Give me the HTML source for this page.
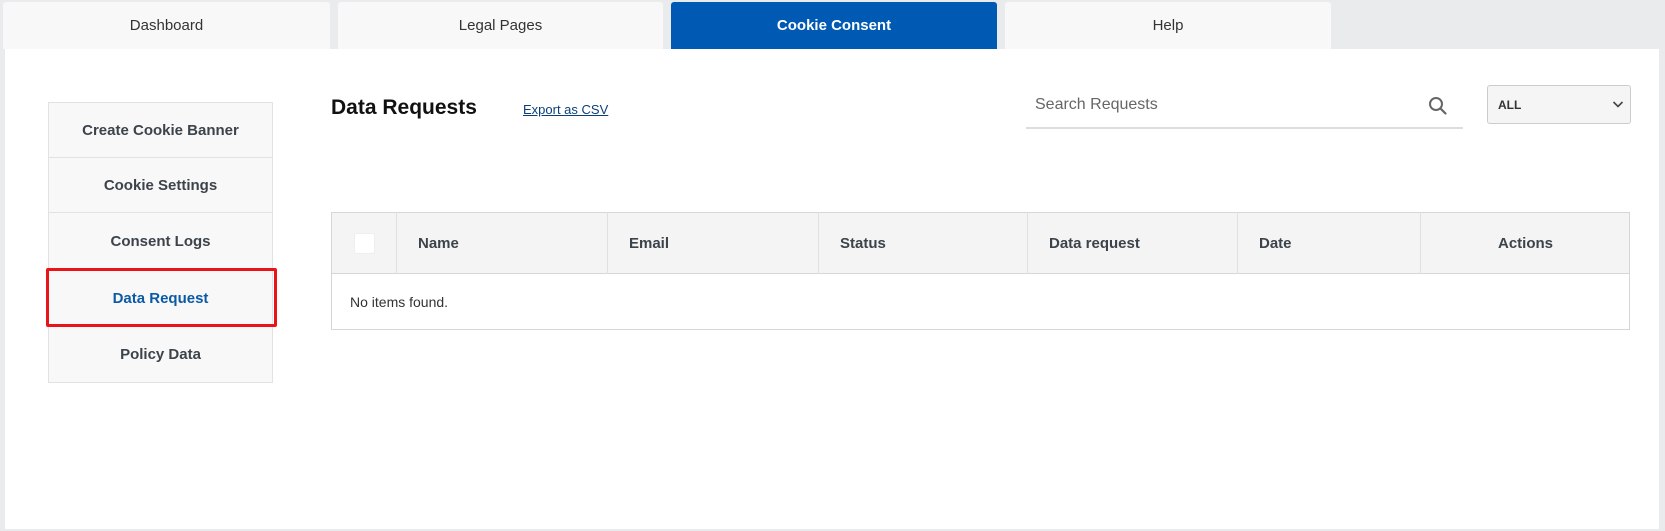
<!DOCTYPE html>
<html><head><meta charset="utf-8"><style>
*{box-sizing:border-box;margin:0;padding:0}
body{width:1665px;height:531px;background:#eaebed;font-family:"Liberation Sans",sans-serif;position:relative;overflow:hidden}
.a{position:absolute}
.tab{position:absolute;top:2px;height:47px;background:#f8f8f8;border-radius:3px 3px 0 0;font-size:15px;color:#333;display:flex;align-items:center;justify-content:center}
.panel{position:absolute;left:5px;top:49px;width:1654px;height:480px;background:#fff}
.side{position:absolute;left:48px;width:225px;background:#f8f8f8;border:1px solid #e2e2e2;font-size:15px;font-weight:bold;color:#3c434a;display:flex;align-items:center;justify-content:center}
.th{position:absolute;top:212px;height:62px;border-right:1px solid #e0e0e0;font-size:15px;font-weight:bold;color:#3c434a;display:flex;align-items:center;padding-left:21px}
</style></head><body>
<div class="tab" style="left:3px;width:327px">Dashboard</div>
<div class="tab" style="left:338px;width:325px">Legal Pages</div>
<div class="tab" style="left:671px;width:326px;background:#0059b3;color:#fff;font-weight:bold">Cookie Consent</div>
<div class="tab" style="left:1005px;width:326px">Help</div>
<div class="panel"></div>

<div class="side" style="top:102px;height:56px">Create Cookie Banner</div>
<div class="side" style="top:157px;height:56px">Cookie Settings</div>
<div class="side" style="top:212px;height:58px">Consent Logs</div>
<div class="side" style="top:269px;height:58px;color:#0b5aa6">Data Request</div>
<div class="side" style="top:326px;height:57px">Policy Data</div>
<div class="a" style="left:46px;top:268px;width:231px;height:59px;border:3px solid #e8141a;border-radius:2px"></div>

<div class="a" style="left:331px;top:96px;font-size:21px;font-weight:bold;color:#111">Data Requests</div>
<div class="a" style="left:523px;top:102px;font-size:13px;color:#0b3f7a;text-decoration:underline">Export as CSV</div>
<div class="a" style="left:1035px;top:96px;font-size:16px;color:#666">Search Requests</div>
<svg class="a" style="left:1428px;top:96px" width="20" height="20" viewBox="0 0 20 20"><circle cx="8" cy="8" r="6" fill="none" stroke="#666" stroke-width="2"/><path d="M12.5 12.5L17.5 17.5" stroke="#666" stroke-width="2.2" stroke-linecap="round"/></svg>
<div class="a" style="left:1026px;top:127px;width:437px;height:2px;background:#ddd"></div>
<div class="a" style="left:1487px;top:85px;width:144px;height:39px;background:#f5f5f5;border:1px solid #ccc;border-radius:3px"></div>
<div class="a" style="left:1498px;top:98px;font-size:12px;font-weight:bold;color:#333">ALL</div>
<svg class="a" style="left:1612px;top:100px" width="12" height="9" viewBox="0 0 12 9"><path d="M1.5 2L6 6.5L10.5 2" fill="none" stroke="#444" stroke-width="1.6"/></svg>

<div class="a" style="left:331px;top:212px;width:1299px;height:118px;border:1px solid #d6d6d6;background:#fff"></div>
<div class="a" style="left:332px;top:213px;width:1297px;height:61px;background:#f4f4f4;border-bottom:1px solid #d6d6d6"></div>
<div class="th" style="left:332px;width:65px;padding:0"><div style="margin-left:22px;width:21px;height:21px;background:#fff;border-radius:3px;border:1px solid #eee"></div></div>
<div class="th" style="left:397px;width:211px">Name</div>
<div class="th" style="left:608px;width:211px">Email</div>
<div class="th" style="left:819px;width:209px">Status</div>
<div class="th" style="left:1028px;width:210px">Data request</div>
<div class="th" style="left:1238px;width:183px">Date</div>
<div class="th" style="left:1421px;width:209px;border-right:none;padding:0;justify-content:center">Actions</div>
<div class="a" style="left:350px;top:294px;font-size:14px;color:#333">No items found.</div>
</body></html>
